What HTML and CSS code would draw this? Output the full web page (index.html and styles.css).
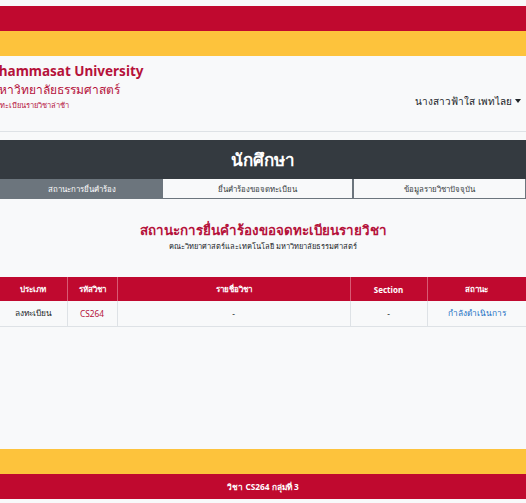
FILE: index.html
```html
<!DOCTYPE html>
<html lang="th">
<head>
<meta charset="utf-8">
<title>ระบบลงทะเบียนรายวิชาล่าช้า</title>
<link rel="stylesheet" href="styles.css">
</head>
<body>
<div class="page">
  <div class="top-gap"></div>
  <div class="band band-red"></div>
  <div class="band band-yellow"></div>
  <nav class="navbar">
    <div class="brand">
      <div class="brand-en">Thammasat University</div>
      <div class="brand-th">มหาวิทยาลัยธรรมศาสตร์</div>
      <div class="brand-sub">ลงทะเบียนรายวิชาล่าช้า</div>
    </div>
    <div class="user">นางสาวฟ้าใส เพทไลย <span class="caret"></span></div>
  </nav>
  <div class="role-bar">นักศึกษา</div>
  <div class="tabs">
    <div class="tab tab-active tab-1">สถานะการยื่นคำร้อง</div>
    <div class="tab tab-2">ยื่นคำร้องขอจดทะเบียน</div>
    <div class="tab tab-3">ข้อมูลรายวิชาปัจจุบัน</div>
  </div>
  <div class="heading">
    <h1 class="title">สถานะการยื่นคำร้องขอจดทะเบียนรายวิชา</h1>
    <p class="subtitle">คณะวิทยาศาสตร์และเทคโนโลยี มหาวิทยาลัยธรรมศาสตร์</p>
  </div>
  <table class="status-table">
    <colgroup>
      <col class="c1"><col class="c2"><col class="c3"><col class="c4"><col class="c5">
    </colgroup>
    <thead>
      <tr><th>ประเภท</th><th>รหัสวิชา</th><th>รายชื่อวิชา</th><th>Section</th><th>สถานะ</th></tr>
    </thead>
    <tbody>
      <tr><td>ลงทะเบียน</td><td class="code">CS264</td><td>-</td><td>-</td><td class="pending">กำลังดำเนินการ</td></tr>
    </tbody>
  </table>
  <footer class="footer">
    <div class="band band-yellow"></div>
    <div class="footer-red">วิชา CS264 กลุ่มที่ 3</div>
  </footer>
</div>
</body>
</html>
```
FILE: styles.css
```css
* { box-sizing: border-box; }
html, body { margin: 0; padding: 0; }
body {
  background: #f8f9fa;
  font-family: "Noto Sans", "Open Sans", "DejaVu Sans", sans-serif;
  color: #212529;
  overflow: hidden;
}
.page {
  min-height: 503px;
  display: flex;
  flex-direction: column;
}
.top-gap { height: 6px; }
.band { height: 25px; }
.band-red { background: #c0092f; }
.band-yellow { background: #fdc33c; }

.navbar {
  height: 76px;
  display: flex;
  justify-content: space-between;
  align-items: flex-start;
  border-bottom: 1px solid #dee2e6;
  background: #f8f9fa;
}
.brand {
  margin-left: -9px;
  padding-top: 6px;
  color: #b5123a;
}
.brand-en {
  font-size: 13.5px;
  font-weight: 700;
  line-height: 19px;
}
.brand-th {
  font-size: 12px;
  font-weight: 500;
  line-height: 18px;
}
.brand-sub {
  font-size: 7.5px;
  line-height: 12px;
  color: #b5123a;
}
.user {
  margin-top: 38px;
  margin-right: 5px;
  font-size: 10px;
  color: #212529;
  display: flex;
  align-items: center;
  gap: 3px;
}
.caret {
  display: inline-block;
  border-left: 3px solid transparent;
  border-right: 3px solid transparent;
  border-top: 4px solid #212529;
  margin-top: -2px;
}

.role-bar {
  margin-top: 8px;
  height: 39px;
  background: #343a40;
  color: #fff;
  font-size: 17px;
  font-weight: 700;
  display: flex;
  align-items: center;
  justify-content: center;
}

.tabs {
  display: flex;
  height: 20px;
}
.tab {
  display: flex;
  align-items: center;
  justify-content: center;
  font-size: 7.8px;
  color: #343a40;
  background: #f8f9fa;
  border: 1px solid #6c757d;
  border-top: none;
}
.tab-active {
  background: #6c757d;
  color: #fff;
}
.tab-1 { width: 163px; }
.tab-2 { width: 191px; border-left: none; border-right-width: 2px; }
.tab-3 { flex: 1; border-left: none; }

.heading {
  text-align: center;
  margin-top: 21px;
}
.title {
  margin: 0;
  font-size: 13.4px;
  font-weight: 600;
  color: #b5123a;
  line-height: 20px;
}
.subtitle {
  margin: 0;
  font-size: 7.5px;
  line-height: 12px;
  color: #212529;
}

.status-table {
  margin-top: 25px;
  width: 526px;
  border-collapse: collapse;
  table-layout: fixed;
  font-size: 8px;
}
.c1 { width: 67px; }
.c2 { width: 50px; }
.c3 { width: 233px; }
.c4 { width: 77px; }
.c5 { width: 99px; }
.status-table th {
  background: #c0092f;
  color: #fff;
  font-weight: 700;
  height: 24px;
  text-align: center;
  border-left: 1px solid #d85a74;
  padding: 0;
}
.status-table th:first-child { border-left: none; }
.status-table td {
  height: 25px;
  text-align: center;
  border-left: 1px solid #dee2e6;
  border-bottom: 1px solid #dee2e6;
  padding: 0;
  color: #212529;
  font-size: 8.3px;
}
.status-table td:first-child { border-left: none; }
.status-table td.code { color: #b5123a; }
.status-table td.pending { color: #1a6fc4; }

.footer {
  margin-top: auto;
  margin-bottom: 4px;
}
.footer-red {
  height: 25px;
  background: #c0092f;
  color: #fff;
  font-size: 8.3px;
  font-weight: 700;
  display: flex;
  align-items: center;
  justify-content: center;
}
```
